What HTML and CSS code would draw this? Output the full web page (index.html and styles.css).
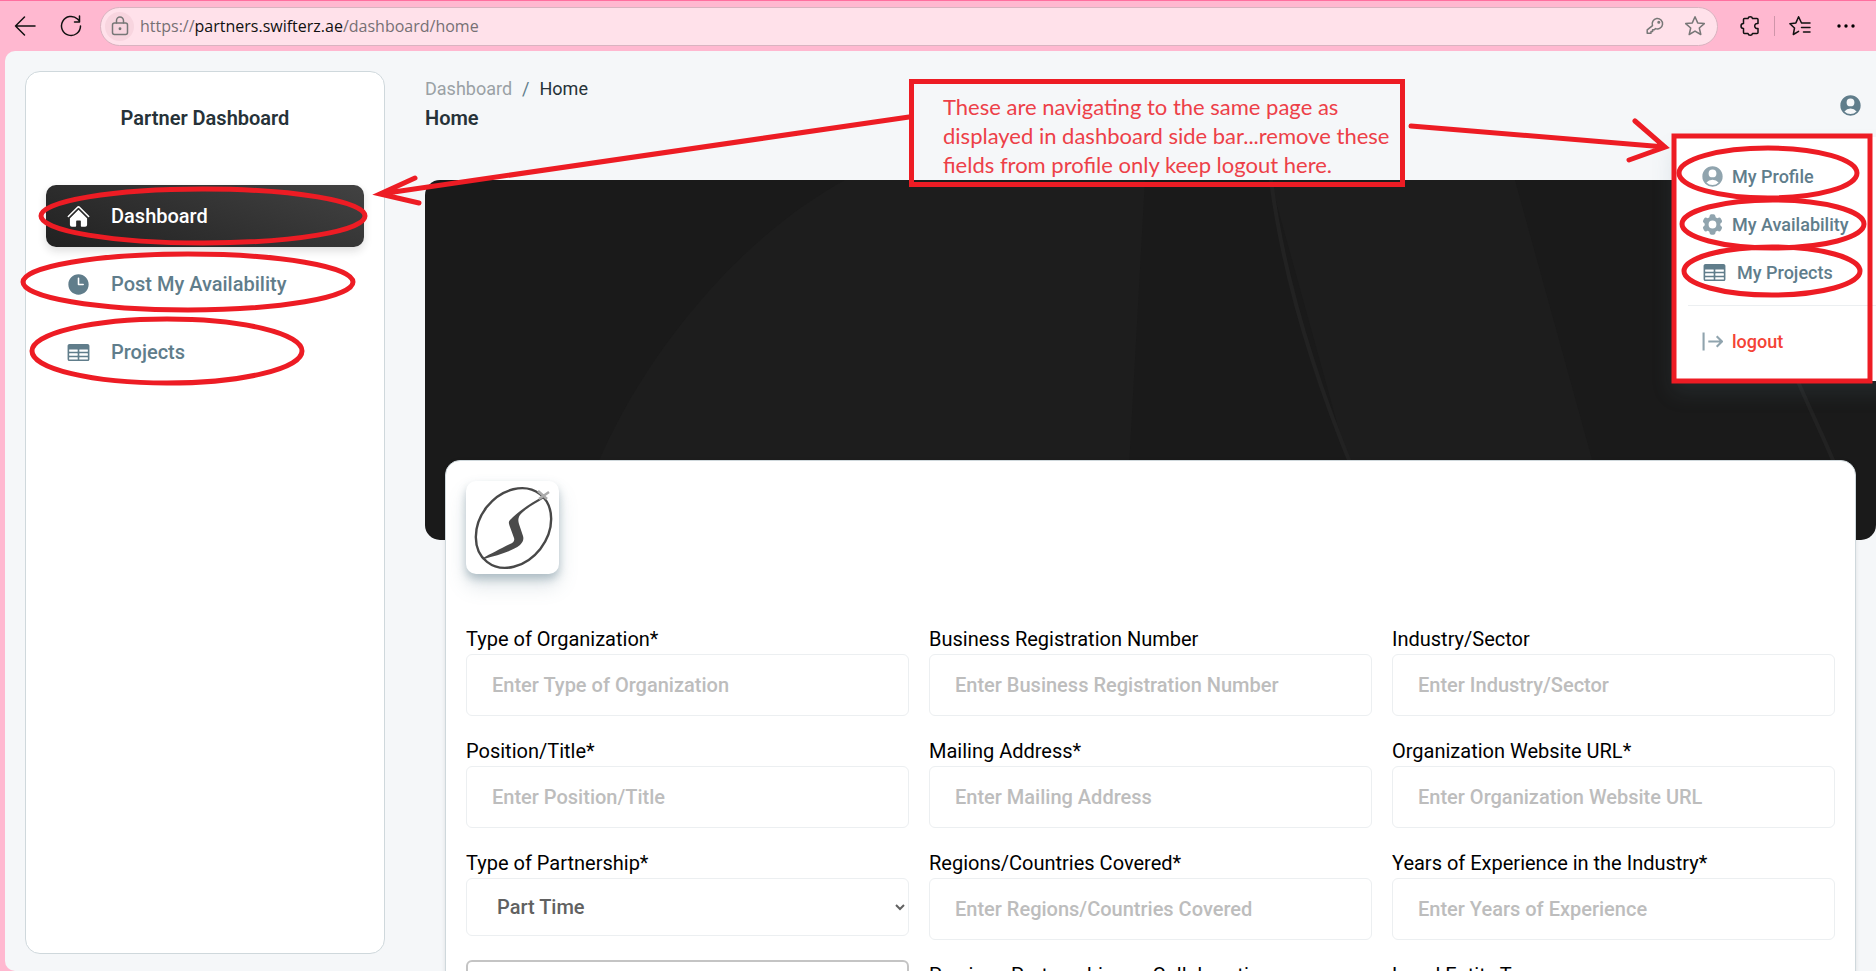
FILE: index.html
```html
<!DOCTYPE html>
<html lang="en">
<head>
<meta charset="utf-8">
<title>Partner Dashboard</title>
<link rel="stylesheet" href="styles.css">
</head>
<body>
<svg class="sprite" aria-hidden="true">
  <symbol id="i-table" viewBox="0 0 24 24"><path fill-rule="evenodd" d="M1.5 5.625c0-1.036.84-1.875 1.875-1.875h17.25c1.035 0 1.875.84 1.875 1.875v12.75c0 1.035-.84 1.875-1.875 1.875H3.375A1.875 1.875 0 0 1 1.5 18.375V5.625ZM21 9.375A.375.375 0 0 0 20.625 9h-7.5a.375.375 0 0 0-.375.375v1.5c0 .207.168.375.375.375h7.5a.375.375 0 0 0 .375-.375v-1.5Zm0 3.75a.375.375 0 0 0-.375-.375h-7.5a.375.375 0 0 0-.375.375v1.5c0 .207.168.375.375.375h7.5a.375.375 0 0 0 .375-.375v-1.5Zm0 3.75a.375.375 0 0 0-.375-.375h-7.5a.375.375 0 0 0-.375.375v1.5c0 .207.168.375.375.375h7.5a.375.375 0 0 0 .375-.375v-1.5ZM10.875 18.75a.375.375 0 0 0 .375-.375v-1.5a.375.375 0 0 0-.375-.375h-7.5a.375.375 0 0 0-.375.375v1.5c0 .207.168.375.375.375h7.5ZM3.375 15h7.5a.375.375 0 0 0 .375-.375v-1.5a.375.375 0 0 0-.375-.375h-7.5a.375.375 0 0 0-.375.375v1.5c0 .207.168.375.375.375Zm0-3.75h7.5a.375.375 0 0 0 .375-.375v-1.5A.375.375 0 0 0 10.875 9h-7.5A.375.375 0 0 0 3 9.375v1.5c0 .207.168.375.375.375Z"/></symbol>
  <symbol id="i-user" viewBox="0 0 24 24"><path fill-rule="evenodd" d="M18.685 19.097A9.723 9.723 0 0 0 21.75 12c0-5.385-4.365-9.75-9.75-9.75S2.25 6.615 2.25 12a9.723 9.723 0 0 0 3.065 7.097A9.716 9.716 0 0 0 12 21.75a9.716 9.716 0 0 0 6.685-2.653Zm-12.54-1.285A7.486 7.486 0 0 1 12 15a7.486 7.486 0 0 1 5.855 2.812A8.224 8.224 0 0 1 12 20.25a8.224 8.224 0 0 1-5.855-2.438ZM15.75 9a3.75 3.75 0 1 1-7.5 0 3.75 3.75 0 0 1 7.5 0Z"/></symbol>
</svg>

<header class="browser">
  <button class="tool" aria-label="Back"><svg width="22" height="22" viewBox="0 0 22 22" class="line dark"><path d="M21 11H1.500M10.500 2 1.500 11l9 9"/></svg></button>
  <button class="tool" aria-label="Refresh"><svg width="22" height="22" viewBox="0 0 22 22" class="line dark"><path d="M20.500 11a9.500 9.500 0 1 1-3-7L19.500 6M19.500 1v6h-5"/></svg></button>
  <div class="address">
    <span class="lock"><svg width="18" height="20" viewBox="0 0 18 20" class="line"><rect x="1.500" y="7" width="15" height="11.500" rx="2"/><path d="M5.500 7V4.500a3.500 3.500 0 0 1 7 0V7"/><circle cx="9" cy="12.700" r=".7"/></svg></span>
    <span class="url">https://<b>partners.swifterz.ae</b>/dashboard/home</span>
    <button class="tool" aria-label="Passwords"><svg width="18" height="18" viewBox="0 0 18 18" class="line"><path d="M6.500 8.600A5.200 5.200 0 1 1 9.500 11.600L8.300 12.800H6.600v1.700H5v1.700H1.200v-3.300Z"/><circle cx="12.800" cy="5.200" r=".8"/></svg></button>
    <button class="tool" aria-label="Favorite"><svg width="22" height="22" viewBox="0 0 22 22" class="line"><path d="m11 1.800 2.700 6.100 6.600.7-5 4.400 1.500 6.500-5.800-3.400-5.800 3.400L6.700 13l-5-4.400 6.600-.7Z"/></svg></button>
  </div>
  <button class="tool" aria-label="Extensions"><svg width="22" height="22" viewBox="0 0 22 22" class="line dark"><path d="M5.500 3.500H9a2.300 2.300 0 0 1 4.500 0H18a1 1 0 0 1 1 1V8.500a2.600 2.600 0 1 0 0 5V17.500a1 1 0 0 1-1 1H13.500a2.300 2.300 0 0 1-4.500 0H5.500a1 1 0 0 1-1-1V13.500a2.500 2.500 0 0 1 0-5V4.500a1 1 0 0 1 1-1Z"/></svg></button>
  <span class="divider"></span>
  <button class="tool" aria-label="Favorites list"><svg width="22" height="22" viewBox="0 0 22 22" class="line dark"><path d="M12.500 8 9.600 1.800 6.900 7.900l-6 .8 4.600 4.300-1.200 6.500 5.300-3.200M12.500 8H21M12.500 12.500H21M14.500 17H21"/></svg></button>
  <button class="tool more" aria-label="Settings and more"><svg width="18" height="22" viewBox="0 0 18 22"><circle cx="2" cy="11" r="1.700"/><circle cx="9" cy="11" r="1.700"/><circle cx="16" cy="11" r="1.700"/></svg></button>
</header>

<div class="page">
  <aside class="sidebar">
    <h1 class="brand">Partner Dashboard</h1>
    <nav class="nav">
      <a class="nav-link active" href="#"><svg class="icon" viewBox="0 0 24 24"><path d="M11.470 3.841a.75.75 0 0 1 1.060 0l8.690 8.690a.75.75 0 1 0 1.060-1.061l-8.689-8.690a2.250 2.250 0 0 0-3.182 0l-8.690 8.690a.75.75 0 1 0 1.061 1.060l8.690-8.689Z"/><path d="m12 5.432 8.159 8.159c.03.030.06.058.091.086v6.198c0 1.035-.84 1.875-1.875 1.875H15a.75.75 0 0 1-.75-.75v-4.500a.75.75 0 0 0-.75-.75h-3a.75.75 0 0 0-.75.75V21a.75.75 0 0 1-.75.75H5.625a1.875 1.875 0 0 1-1.875-1.875v-6.198a2.290 2.290 0 0 0 .091-.086L12 5.432Z"/></svg>Dashboard</a>
      <a class="nav-link" href="#"><svg class="icon" viewBox="0 0 24 24"><path fill-rule="evenodd" d="M12 2.250c-5.385 0-9.750 4.365-9.750 9.750s4.365 9.750 9.750 9.750 9.750-4.365 9.750-9.750S17.385 2.250 12 2.250ZM12.750 6a.75.75 0 0 0-1.500 0v6c0 .414.336.75.75.75h4.500a.75.75 0 0 0 0-1.500h-3.750V6Z"/></svg>Post My Availability</a>
      <a class="nav-link" href="#"><svg class="icon"><use href="#i-table"/></svg>Projects</a>
    </nav>
  </aside>

  <main class="main">
    <div class="topbar">
      <div>
        <nav class="crumbs" aria-label="Breadcrumb"><a href="#">Dashboard</a><span>/</span><b>Home</b></nav>
        <h2 class="title">Home</h2>
      </div>
      <button class="account" aria-label="Account"><svg class="icon"><use href="#i-user"/></svg></button>
    </div>

    <div class="banner">
      <svg width="100%" height="100%" viewBox="0 0 1451 360" preserveAspectRatio="none" aria-hidden="true">
        <path class="fold" d="M420 0C310 60 215 180 170 290L400 360H700L720 0Z"/>
        <path class="fold" d="M845 0 925 290H1170L1090 0Z"/>
        <path class="crease" d="M846 0C860 110 895 210 928 290M1368 190C1385 230 1400 260 1412 290"/>
      </svg>
    </div>

    <form class="card">
      <div class="logo">
        <svg viewBox="0 0 93 93" role="img" aria-label="Swifterz"><ellipse cx="47.500" cy="47" rx="43" ry="34" transform="rotate(-52 47.500 47)" fill="none" stroke="#484848" stroke-width="2.400"/><path fill="#4a4a4a" d="M77 16C65 21 52 31 44 39c-2 2-1 4 0 7l4 11c1 3-1 5-4 6-10 5-20 10-27 14-1 1 0 2 1 1 13-4 27-7 36-14 3-3 4-6 3-9l-4-12c-1-3-1-6 1-9 7-8 17-12 24-17Z"/><path stroke="#aaa" stroke-width="2.500" d="m72 10 9 8M73 18l10-7"/></svg>
      </div>
      <div class="fields">
        <div class="field"><label for="f1">Type of Organization*</label><input id="f1" placeholder="Enter Type of Organization"></div>
        <div class="field"><label for="f2">Business Registration Number</label><input id="f2" placeholder="Enter Business Registration Number"></div>
        <div class="field"><label for="f3">Industry/Sector</label><input id="f3" placeholder="Enter Industry/Sector"></div>
        <div class="field"><label for="f4">Position/Title*</label><input id="f4" placeholder="Enter Position/Title"></div>
        <div class="field"><label for="f5">Mailing Address*</label><input id="f5" placeholder="Enter Mailing Address"></div>
        <div class="field"><label for="f6">Organization Website URL*</label><input id="f6" placeholder="Enter Organization Website URL"></div>
        <div class="field"><label for="f7">Type of Partnership*</label><select id="f7"><option>Part Time</option><option>Full Time</option></select></div>
        <div class="field"><label for="f8">Regions/Countries Covered*</label><input id="f8" placeholder="Enter Regions/Countries Covered"></div>
        <div class="field"><label for="f9">Years of Experience in the Industry*</label><input id="f9" placeholder="Enter Years of Experience"></div>
        <div class="field"><input class="outlined" aria-label="Additional details"></div>
        <div class="field"><label for="f11">Previous Partnerships or Collaborations</label><input id="f11"></div>
        <div class="field"><label for="f12">Legal Entity Type</label><input id="f12"></div>
      </div>
    </form>
  </main>
</div>

<div class="menu">
  <a href="#"><svg class="icon soft"><use href="#i-user"/></svg>My Profile</a>
  <a href="#"><svg class="icon soft" viewBox="0 0 24 24"><path fill-rule="evenodd" d="M11.078 2.250c-.917 0-1.699.663-1.850 1.567L9.050 4.889c-.020.120-.115.260-.297.348a7.493 7.493 0 0 0-.986.570c-.166.115-.334.126-.450.083L6.300 5.508a1.875 1.875 0 0 0-2.282.819l-.922 1.597a1.875 1.875 0 0 0 .432 2.385l.840.692c.095.078.170.229.154.430a7.598 7.598 0 0 0 0 1.139c.015.200-.059.352-.153.430l-.841.692a1.875 1.875 0 0 0-.432 2.385l.922 1.597a1.875 1.875 0 0 0 2.282.818l1.019-.382c.115-.043.283-.031.450.082.312.214.641.405.985.570.182.088.277.228.297.350l.178 1.071c.151.904.933 1.567 1.850 1.567h1.844c.916 0 1.699-.663 1.850-1.567l.178-1.072c.020-.120.114-.260.297-.349.344-.165.673-.356.985-.570.167-.114.335-.125.450-.082l1.020.382a1.875 1.875 0 0 0 2.280-.819l.923-1.597a1.875 1.875 0 0 0-.432-2.385l-.840-.692c-.095-.078-.170-.229-.154-.430a7.614 7.614 0 0 0 0-1.139c-.016-.200.059-.352.153-.430l.840-.692c.708-.582.891-1.590.433-2.385l-.922-1.597a1.875 1.875 0 0 0-2.282-.818l-1.020.382c-.114.043-.282.031-.449-.083a7.490 7.490 0 0 0-.985-.570c-.183-.087-.277-.227-.297-.348l-.179-1.072a1.875 1.875 0 0 0-1.850-1.567h-1.843ZM12 15.750a3.750 3.750 0 1 0 0-7.500 3.750 3.750 0 0 0 0 7.500Z"/></svg>My Availability</a>
  <a href="#" class="wide"><svg class="icon"><use href="#i-table"/></svg>My Projects</a>
  <hr>
  <a href="#" class="logout"><svg class="icon exit" viewBox="0 0 20 20"><path d="M1.500 1.500v17M6 10h13M14 5l5 5-5 5"/></svg>logout</a>
</div>

<svg class="marks" aria-hidden="true">
  <ellipse cx="203" cy="216" rx="162" ry="27"/>
  <ellipse cx="188" cy="282" rx="165" ry="28"/>
  <ellipse cx="167" cy="351" rx="135" ry="32"/>
  <ellipse cx="1768" cy="173" rx="89" ry="25"/>
  <ellipse cx="1773" cy="224" rx="91" ry="24"/>
  <ellipse cx="1772" cy="271" rx="88" ry="24"/>
  <rect x="1674" y="136" width="196" height="245"/>
  <path d="M909 117 380 194M415 178 380 194 419 203M1411 126 1665 147M1635 121 1665 147 1629 160"/>
</svg>
<p class="note">These are navigating to the same page as<br>displayed in dashboard side bar...remove these<br>fields from profile only keep logout here.</p>
</body>
</html>
```
FILE: styles.css
```css
* { box-sizing: border-box; }

body {
  margin: 0;
  height: 100vh;
  display: flex;
  flex-direction: column;
  overflow: hidden;
  position: relative;
  background: #ffb8d0;
  font-family: Roboto, "Liberation Sans", sans-serif;
  font-size: 20px;
  color: #263238;
}

button { border: 0; padding: 0; background: none; cursor: pointer; }
a { color: inherit; text-decoration: none; }
.sprite { position: absolute; width: 0; height: 0; }
.icon { width: 25px; height: 25px; fill: currentColor; flex: none; }

/* Browser toolbar */
.browser {
  flex: none;
  height: 51px;
  border-top: 1px solid #ff6f9f;
  padding: 0 21px 0 14px;
  display: flex;
  align-items: center;
  gap: 24px;
}
.tool { display: flex; }
.more { margin-left: 2px; }
.line { fill: none; stroke: #777; stroke-width: 1.5; stroke-linejoin: round; stroke-linecap: round; }
.line.dark { stroke: #111; }
.address {
  flex: 1;
  height: 39px;
  margin: 0 -3px 0 -6px;
  padding: 0 11px 0 4px;
  border: 1px solid #d9b3c0;
  border-radius: 20px;
  background: #ffe1ea;
  display: flex;
  align-items: center;
  gap: 20px;
}
.lock {
  width: 29px;
  height: 29px;
  border-radius: 50%;
  background: #f8d5df;
  display: grid;
  place-items: center;
}
.url {
  flex: 1;
  margin-left: -14px;
  font-family: "Open Sans", sans-serif;
  font-size: 16px;
  line-height: 24px;
  padding-bottom: 1px;
  color: #767074;
}
.url b { font-weight: 400; color: #111; }
.divider { width: 1px; height: 20px; margin: 0 -10px 0 -11px; background: #cf95a9; }

/* Page */
.page {
  flex: 1;
  min-height: 0;
  margin-left: 5px;
  padding-left: 20px;
  border-radius: 10px 0 0 10px;
  background: #f5f7f9;
  display: flex;
  gap: 40px;
  overflow: hidden;
}
.sidebar {
  flex: none;
  width: 360px;
  margin: 20px 0 17px;
  padding: 0 20px;
  border: 1px solid #cfd8dc;
  border-radius: 15px;
  background: #fff;
}
.brand {
  margin: 29px 0 50px;
  font-size: 20px;
  line-height: 34px;
  font-weight: 600;
  text-align: center;
}
.nav { display: grid; gap: 6px; }
.nav-link {
  height: 62px;
  padding: 0 20px;
  border-radius: 10px;
  display: flex;
  align-items: center;
  gap: 20px;
  font-weight: 500;
  color: #607d8b;
}
.nav-link.active {
  color: #fff;
  background: linear-gradient(20deg, #212121, #424242);
  box-shadow: 0 4px 8px rgba(33, 33, 33, .15);
}

.main { flex: 1; min-width: 0; padding-top: 20px; }
.topbar {
  height: 109px;
  padding: 3px 13px 0 0;
  display: flex;
  justify-content: space-between;
  align-items: flex-start;
}
.crumbs { display: flex; gap: 10px; font-size: 18px; line-height: 30px; color: #607d8b; }
.crumbs a { color: #9aa1a5; }
.crumbs b { font-weight: 400; color: #263238; }
.title { margin: 0; font-size: 20px; line-height: 28px; font-weight: 600; }
.account { margin-top: 19px; color: #607d8b; display: flex; }

.banner { height: 360px; border-radius: 15px; background: #1a1a1a; overflow: hidden; }
.fold { fill: #1d1d1d; }
.crease { fill: none; stroke: #222; stroke-width: 4; }

.card {
  position: relative;
  margin: -80px 20px 0;
  padding: 20px;
  border: 1px solid #cfd8dc;
  border-radius: 15px;
  background: #fff;
  box-shadow: 0 1px 4px rgba(0, 0, 0, .1);
}
.logo {
  width: 93px;
  height: 93px;
  border-radius: 10px;
  background: #fff;
  box-shadow: 0 12px 20px rgba(96, 125, 139, .2), 0 5px 8px rgba(96, 125, 139, .4);
}
.logo svg { display: block; }
.fields {
  margin-top: 50px;
  display: grid;
  grid-template-columns: repeat(3, 1fr);
  gap: 20px;
}
.field { display: flex; flex-direction: column; color: #000; }
.field label { line-height: 30px; }
.field input,
.field select {
  height: 62px;
  width: 100%;
  padding: 0 25px;
  border: 1px solid #eceff1;
  border-radius: 6px;
  background: #fff;
  font: 500 20px Roboto, "Liberation Sans", sans-serif;
  color: #616161;
}
.field select { height: 58px; padding: 0 2px 0 26px; }
.field input::placeholder { color: #bdbdbd; opacity: 1; }
.field .outlined { border: 2px solid #c4c4c4; }

/* Profile menu */
.menu {
  position: absolute;
  top: 137px;
  right: -16px;
  width: 220px;
  padding: 15px 16px 16px;
  background: #fff;
  box-shadow: 0 12px 20px rgba(96, 125, 139, .15);
  font-size: 18px;
  font-weight: 500;
  color: #607d8b;
}
.menu a { height: 48px; padding: 0 12px; display: flex; align-items: center; gap: 7px; }
.menu .wide { padding-left: 14px; gap: 10px; }
.menu .soft { color: #90a4ae; }
.menu hr { margin: 9px 0 11px; border: 0; border-top: 1px solid #eceff1; }
.menu .logout { color: #f44336; }
.exit { padding: 2px; fill: none; stroke: #90a4ae; stroke-width: 2; }

/* Review marks */
.marks {
  position: absolute;
  top: 0;
  left: 0;
  width: 100%;
  height: 100%;
  fill: none;
  stroke: #ed1c24;
  stroke-width: 5;
  stroke-linecap: round;
  pointer-events: none;
}
.note {
  position: absolute;
  top: 79px;
  left: 909px;
  margin: 0;
  width: 496px;
  height: 108px;
  padding: 8px 0 0 29px;
  border: 5px solid #ed1c24;
  font-family: Lato, sans-serif;
  font-size: 22px;
  line-height: 29px;
  color: #ed4048;
  white-space: nowrap;
}
```
